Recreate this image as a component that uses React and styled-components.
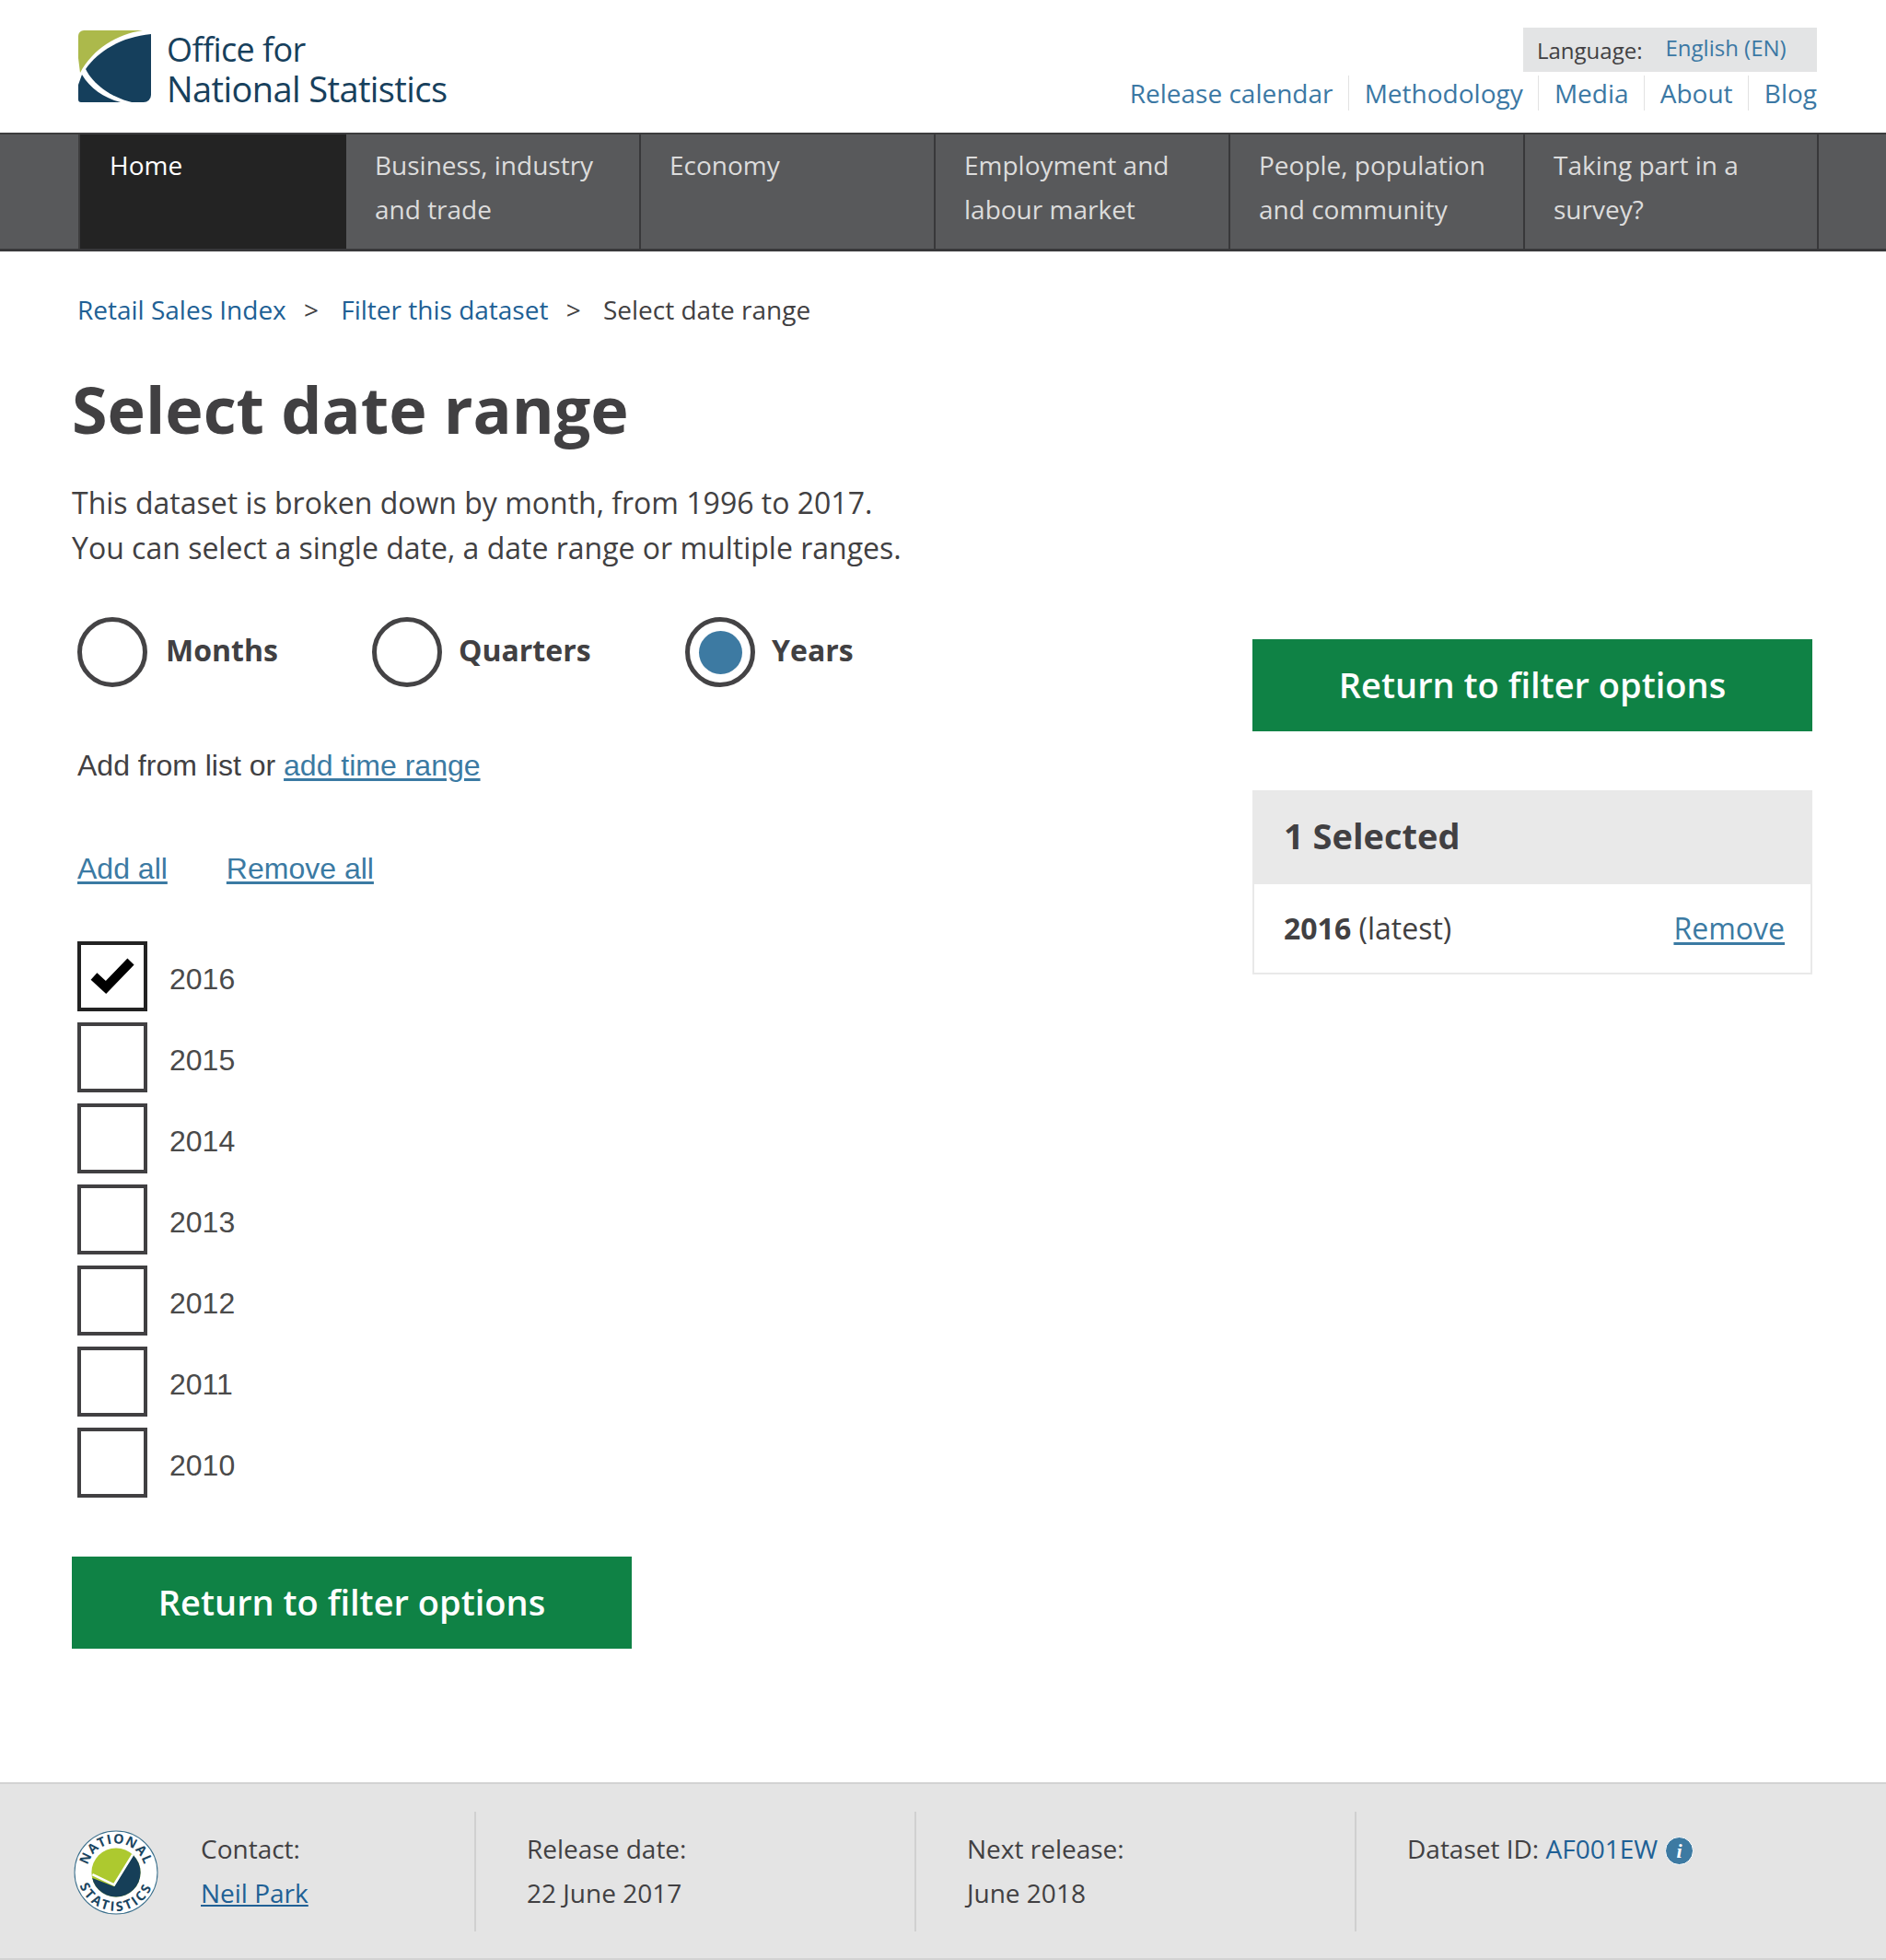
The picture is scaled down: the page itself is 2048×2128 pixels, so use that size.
import React from 'react';
import styled, { createGlobalStyle } from 'styled-components';

const GlobalStyle = createGlobalStyle`
    html, body {
        margin: 0;
        padding: 0;
        background: #fff;
        color: #414042;
        font-family: "Open Sans", "Liberation Sans", sans-serif;
    }
    * { box-sizing: border-box; }
    p, h1, h2, ul { margin: 0; padding: 0; }
    ul { list-style: none; }
`;

const Header = styled.header`
    height: 144px;
    padding: 0 75px 0 85px;
    display: flex;
    justify-content: space-between;
`;

const Brand = styled.div`
    display: flex;
    align-items: flex-start;
    gap: 16px;
    padding-top: 33px;
`;

const BrandName = styled.div`
    color: #17405c;
    font-size: 36px;
    line-height: 42px;
    letter-spacing: -0.6px;
`;

const BrandStrong = styled.span`
    font-size: 38px;
    font-weight: 500;
`;

const HeaderRight = styled.div`
    padding-top: 30px;
    display: flex;
    flex-direction: column;
    align-items: flex-end;
`;

const Language = styled.div`
    width: 319px;
    height: 48px;
    background: #e3e4e5;
    padding-left: 15px;
    display: flex;
    gap: 25px;
    font-size: 24px;
    line-height: 48px;
`;

const LanguageLabel = styled.span`
    padding-top: 1px;
`;

const LanguageLink = styled.a`
    color: #3b78a4;
    margin-top: -2px;
`;

const TopLinks = styled.ul`
    display: flex;
    margin-top: 4px;
`;

const TopLink = styled.li`
    height: 38px;
    line-height: 38px;
    font-size: 28px;
    color: #3b78a4;
    padding: 0 16.6px;
    border-right: 1px solid #e2e2e2;
    &:last-child { border-right: 0; padding-right: 0; }
`;

const Nav = styled.nav`
    height: 129px;
    background: #58595b;
    border-top: 2px solid #3d3d3e;
    border-bottom: 3px solid #38383a;
    padding-left: 85px;
    display: flex;
`;

const NavItem = styled.div`
    width: ${p => p.$width}px;
    padding: 9px 0 0 ${p => p.$active ? 32 : 31}px;
    background: ${p => p.$active ? '#232323' : 'transparent'};
    border-left: ${p => p.$active ? '2px solid #3d3d3e' : '0'};
    border-right: 2px solid ${p => p.$active ? '#232323' : '#38383a'};
    color: ${p => p.$active ? '#fff' : '#dcdcdc'};
    font-size: 28px;
    line-height: 48px;
`;

const Layout = styled.main`
    display: grid;
    grid-template-columns: 1fr 608px;
    padding: 0 80px 0 78px;
`;

const Breadcrumb = styled.div`
    margin: 46px 0 0 6px;
    display: flex;
    font-size: 28px;
    line-height: 35px;
`;

const Crumb = styled.a`
    color: #206095;
`;

const CrumbSep = styled.span`
    width: 59.5px;
    text-align: center;
    padding-right: 5px;
`;

const Title = styled.h1`
    margin-top: 50px;
    font-size: 70px;
    line-height: 80px;
    font-weight: 700;
`;

const Intro = styled.p`
    margin-top: 38px;
    font-size: 32px;
    line-height: 48.5px;
`;

const RadioRow = styled.div`
    margin: 51px 0 0 6px;
    display: flex;
`;

const RadioItem = styled.label`
    width: ${p => p.$width}px;
    display: flex;
    align-items: center;
    gap: ${p => p.$gap}px;
    font-size: 32px;
    font-weight: 700;
`;

const RadioCircle = styled.span`
    width: 76px;
    height: 76px;
    border-radius: 50%;
    border: 5px solid #444345;
    display: flex;
    align-items: center;
    justify-content: center;
    &::after {
        content: "";
        display: ${p => p.$checked ? 'block' : 'none'};
        width: 47px;
        height: 47px;
        border-radius: 50%;
        background: #3d7aa2;
    }
`;

const RadioLabel = styled.span`
    padding-bottom: 5px;
`;

const HelvText = styled.p`
    margin: ${p => p.$top}px 0 0 6px;
    font-family: "Liberation Sans", Arial, sans-serif;
    font-size: 32px;
    line-height: 40px;
`;

const TextLink = styled.a`
    color: #3b7aa3;
    text-decoration: underline;
    text-underline-offset: 3px;
    margin-right: ${p => p.$gap || 0}px;
`;

const CheckList = styled.ul`
    margin: 59px 0 0 6px;
    display: flex;
    flex-direction: column;
    gap: 12px;
`;

const CheckRow = styled.li`
    display: flex;
    align-items: center;
    gap: 24px;
    font-family: "Liberation Sans", Arial, sans-serif;
    font-size: 32px;
    color: #4a4a4a;
`;

const CheckBox = styled.span`
    width: 76px;
    height: 76px;
    border: 4px solid ${p => p.$checked ? '#222' : '#414042'};
    display: flex;
    align-items: center;
    justify-content: center;
`;

const CheckLabel = styled.span`
    padding-top: 6px;
`;

const GreenButton = styled.a`
    display: block;
    width: 608px;
    height: 100px;
    background: #0f8245;
    color: #fff;
    font-size: 38px;
    font-weight: 600;
    line-height: 98px;
    text-align: center;
    margin-top: ${p => p.$top || 0}px;
`;

const Aside = styled.aside`
    padding-top: 421px;
`;

const Selected = styled.section`
    margin-top: 64px;
`;

const SelectedHead = styled.h2`
    height: 102px;
    background: #e9e9e9;
    padding-left: 34px;
    font-size: 38px;
    font-weight: 700;
    line-height: 99px;
`;

const SelectedBody = styled.div`
    height: 98px;
    border: 2px solid #e9e9e9;
    border-top: 0;
    padding: 0 28px 0 32px;
    display: flex;
    justify-content: space-between;
    align-items: center;
    font-size: 32px;
    line-height: 44px;
`;

const Latest = styled.strong`
    font-weight: 700;
`;

const Footer = styled.footer`
    margin-top: 145px;
    height: 193px;
    background: #e4e4e4;
    border-top: 2px solid #d2d2d2;
    border-bottom: 2px solid #d2d2d2;
    padding: 30px 0 0 80px;
    display: flex;
    font-size: 28px;
    line-height: 48px;
`;

const Badge = styled.div`
    width: 138px;
    padding-top: 20px;
`;

const FooterCol = styled.div`
    width: ${p => p.$width}px;
    height: 130px;
    padding: 16px 0 0 ${p => p.$pad}px;
    border-right: ${p => p.$last ? '0' : '2px solid #d0d0d0'};
`;

const FooterLink = styled.a`
    color: #206095;
    text-decoration: ${p => p.$plain ? 'none' : 'underline'};
`;

const InfoDot = styled.span`
    display: inline-block;
    width: 31px;
    height: 31px;
    margin-left: 8px;
    border-radius: 50%;
    border: 1px solid #fff;
    background: #3d7aa2;
    color: #fff;
    font-family: "Liberation Serif", serif;
    font-style: italic;
    font-weight: 700;
    font-size: 22px;
    line-height: 29px;
    text-align: center;
    vertical-align: 1px;
`;

const OnsLogo = () => (
    <svg width="80" height="79" viewBox="0 0 80 79">
        <path d="M6 0H70C42 4 16 20 2 46L0 30V6a6 6 0 0 1 6-6z" fill="#acb94b" />
        <path d="M79 4C47 7 22 22 8 42C16 58 34 72 58 78H71A8 8 0 0 0 79 70Z" fill="#153f5c" />
        <path d="M4 48C13 63 27 73 46 78H3A3 3 0 0 1 0 75V59Z" fill="#153f5c" />
    </svg>
);

const StatsBadge = () => (
    <svg width="92" height="92" viewBox="0 0 90 90">
        <defs>
            <clipPath id="disc"><circle cx="45" cy="45" r="26" /></clipPath>
            <path id="arcTop" d="M14 45A31 31 0 0 1 76 45" />
            <path id="arcBottom" d="M4 45A41 41 0 0 0 86 45" />
        </defs>
        <circle cx="45" cy="45" r="44" fill="#fff" stroke="#3a6f8c" strokeWidth="1" />
        <circle cx="45" cy="45" r="26" fill="#adc92f" />
        <path d="M10 47L43 60L66 22L80 40L70 85L10 85Z" fill="#163f58" clipPath="url(#disc)" />
        <path d="M20 47L43 58L64 24" fill="none" stroke="#fff" strokeWidth="2.5" clipPath="url(#disc)" />
        <text fill="#1a4560" fontFamily="Open Sans" fontWeight="700" fontSize="14">
            <textPath href="#arcTop" startOffset="50%" textAnchor="middle" letterSpacing="1">NATIONAL</textPath>
        </text>
        <text fill="#1a4560" fontFamily="Open Sans" fontWeight="700" fontSize="14">
            <textPath href="#arcBottom" startOffset="50%" textAnchor="middle" letterSpacing="2.5">STATISTICS</textPath>
        </text>
    </svg>
);

const Tick = () => (
    <svg width="48" height="40" viewBox="0 0 48 40">
        <path d="M4 20L17 32L44 4" fill="none" stroke="#000" strokeWidth="10" />
    </svg>
);

const navItems = [
    { width: 320, lines: ['Business, industry', 'and trade'] },
    { width: 320, lines: ['Economy'] },
    { width: 320, lines: ['Employment and', 'labour market'] },
    { width: 320, lines: ['People, population', 'and community'] },
    { width: 319, lines: ['Taking part in a', 'survey?'] }
];

const years = [2016, 2015, 2014, 2013, 2012, 2011, 2010];

const App = () => {
    return (
        <>
            <GlobalStyle />
            <Header>
                <Brand>
                    <OnsLogo />
                    <BrandName>Office for<br /><BrandStrong>National Statistics</BrandStrong></BrandName>
                </Brand>
                <HeaderRight>
                    <Language>
                        <LanguageLabel>Language:</LanguageLabel>
                        <LanguageLink>English (EN)</LanguageLink>
                    </Language>
                    <TopLinks>
                        <TopLink>Release calendar</TopLink>
                        <TopLink>Methodology</TopLink>
                        <TopLink>Media</TopLink>
                        <TopLink>About</TopLink>
                        <TopLink>Blog</TopLink>
                    </TopLinks>
                </HeaderRight>
            </Header>
            <Nav>
                <NavItem $active $width={291}>Home</NavItem>
                {navItems.map(({ width, lines }) => (
                    <NavItem key={lines[0]} $width={width}>
                        {lines[0]}{lines[1] ? <br /> : null}{lines[1]}
                    </NavItem>
                ))}
            </Nav>
            <Layout>
                <div>
                    <Breadcrumb>
                        <Crumb>Retail Sales Index</Crumb>
                        <CrumbSep>&gt;</CrumbSep>
                        <Crumb>Filter this dataset</Crumb>
                        <CrumbSep>&gt;</CrumbSep>
                        <span>Select date range</span>
                    </Breadcrumb>
                    <Title>Select date range</Title>
                    <Intro>
                        This dataset is broken down by month, from 1996 to 2017.<br />
                        You can select a single date, a date range or multiple ranges.
                    </Intro>
                    <RadioRow>
                        <RadioItem $width={320} $gap={20}><RadioCircle /><RadioLabel>Months</RadioLabel></RadioItem>
                        <RadioItem $width={340} $gap={18}><RadioCircle /><RadioLabel>Quarters</RadioLabel></RadioItem>
                        <RadioItem $width={300} $gap={18}><RadioCircle $checked /><RadioLabel>Years</RadioLabel></RadioItem>
                    </RadioRow>
                    <HelvText $top={65}>Add from list or <TextLink>add time range</TextLink></HelvText>
                    <HelvText $top={72}>
                        <TextLink $gap={64}>Add all</TextLink>
                        <TextLink>Remove all</TextLink>
                    </HelvText>
                    <CheckList>
                        {years.map((year, i) => (
                            <CheckRow key={year}>
                                <CheckBox $checked={i === 0}>{i === 0 ? <Tick /> : null}</CheckBox>
                                <CheckLabel>{year}</CheckLabel>
                            </CheckRow>
                        ))}
                    </CheckList>
                    <GreenButton $top={64}>Return to filter options</GreenButton>
                </div>
                <Aside>
                    <GreenButton>Return to filter options</GreenButton>
                    <Selected>
                        <SelectedHead>1 Selected</SelectedHead>
                        <SelectedBody>
                            <span><Latest>2016</Latest> (latest)</span>
                            <TextLink>Remove</TextLink>
                        </SelectedBody>
                    </Selected>
                </Aside>
            </Layout>
            <Footer>
                <Badge><StatsBadge /></Badge>
                <FooterCol $width={299} $pad={0}>
                    Contact:<br />
                    <FooterLink>Neil Park</FooterLink>
                </FooterCol>
                <FooterCol $width={478} $pad={55}>
                    Release date:<br />22 June 2017
                </FooterCol>
                <FooterCol $width={478} $pad={55}>
                    Next release:<br />June 2018
                </FooterCol>
                <FooterCol $width={500} $pad={55} $last>
                    Dataset ID: <FooterLink $plain>AF001EW</FooterLink><InfoDot>i</InfoDot>
                </FooterCol>
            </Footer>
        </>
    );
}

export default App;
